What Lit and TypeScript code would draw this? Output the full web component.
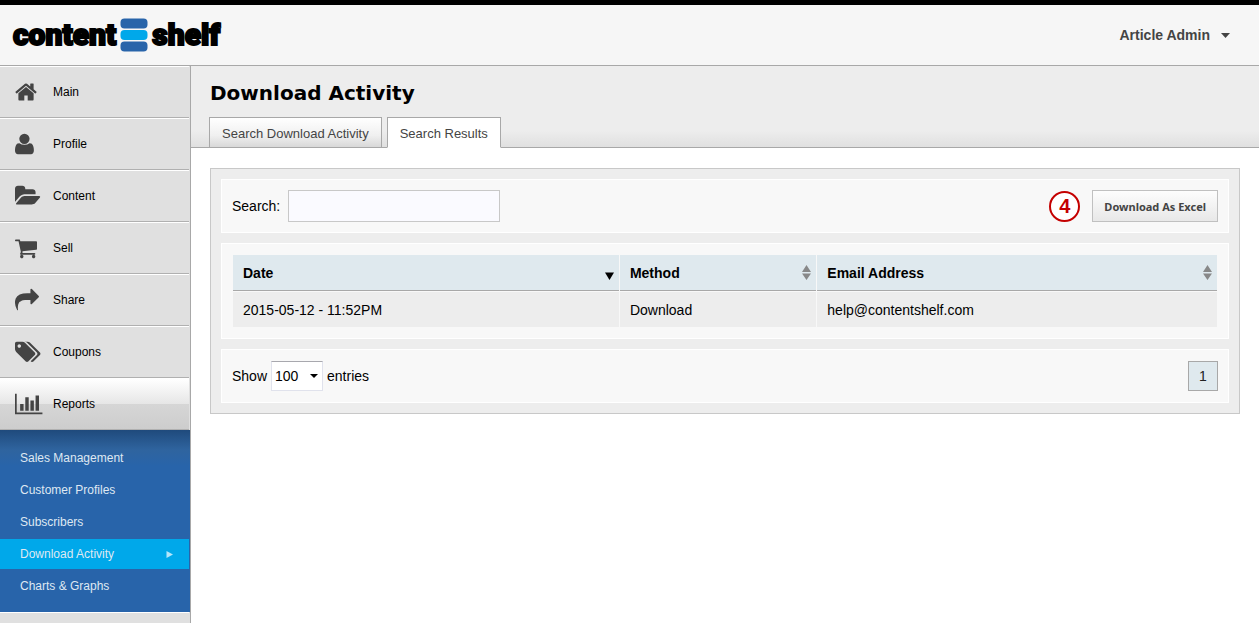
import { LitElement, html, css, svg } from "lit";
import { customElement, state } from "lit/decorators.js";
import { classMap } from "lit/directives/class-map.js";

interface NavItem {
  label: string;
  box: string;
  width: number;
  path: string;
  active?: boolean;
}

const NAV: NavItem[] = [
  {
    label: "Main", box: "64 0 1664 1792", width: 22,
    path: "M1472 992v480q0 26-19 45t-45 19h-384v-384h-256v384h-384q-26 0-45-19t-19-45v-480q0-1 .5-3t.5-3l575-474 575 474q1 2 1 6zm223-69l-62 74q-8 9-21 11h-3q-13 0-21-7l-692-577-692 577q-12 8-24 7-13-2-21-11l-62-74q-8-10-7-23.5t11-21.5l719-599q32-26 76-26t76 26l244 204v-195q0-14 9-23t23-9h192q14 0 23 9t9 23v408l219 182q10 8 11 21.5t-7 23.5z",
  },
  {
    label: "Profile", box: "256 0 1408 1792", width: 19,
    path: "M1664 1399q0 109-62.500 187t-150.500 78h-982q-88 0-150.500-78t-62.500-187q0-85 8.500-160.500t31.500-152 58.500-131 94-89 134.500-34.500q150 128 377 128t377-128q76 0 134.500 34.500t94 89 58.500 131 31.500 152 8.500 160.500zm-320-887q0 159-112.500 271.500t-271.500 112.500-271.500-112.500-112.500-271.500 112.500-271.500 271.500-112.500 271.500 112.500 112.500 271.500z",
  },
  {
    label: "Content", box: "0 0 1920 1792", width: 26,
    path: "M1879 952q0 31-31 66l-336 396q-43 51-120.500 86.500t-143.500 35.500h-1088q-34 0-60.500-13t-26.500-43q0-31 31-66l336-396q43-51 120.500-86.500t143.500-35.500h1088q34 0 60.500 13t26.500 43zm-343-344v160h-832q-94 0-197 47.500t-164 119.500l-337 396-5 6q0-4-.5-12.500t-.5-12.500v-960q0-92 66-158t158-66h320q92 0 158 66t66 158v32h544q92 0 158 66t66 158z",
  },
  {
    label: "Sell", box: "64 0 1664 1792", width: 22,
    path: "M704 1536q0 52-38 90t-90 38-90-38-38-90 38-90 90-38 90 38 38 90zm896 0q0 52-38 90t-90 38-90-38-38-90 38-90 90-38 90 38 38 90zm128-1088v512q0 24-16.500 42.500t-40.500 21.500l-1044 122q13 60 13 70 0 16-24 64h920q26 0 45 19t19 45-19 45-45 19h-1024q-26 0-45-19t-19-45q0-11 8-31.500t16-36 21.500-40 15.500-29.500l-177-823h-204q-26 0-45-19t-19-45 19-45 45-19h256q16 0 28.500 6.500t19.500 15.500 13 24.500 8 26 5.500 29.500 4.500 26h1201q26 0 45 19t19 45z",
  },
  {
    label: "Share", box: "0 0 1792 1792", width: 24,
    path: "M1792 640q0 26-19 45l-512 512q-19 19-45 19t-45-19-19-45v-256h-224q-98 0-175.500 6t-154 21.500-133 42.500-105.500 69.500-80 101-48.500 138.500-17.500 181q0 55 5 123 0 6 2.500 23.500t2.500 26.500q0 15-8.500 25t-23.500 10q-16 0-28-17-7-9-13-22t-13.500-30-10.500-24q-127-285-127-451 0-199 53-333 162-403 875-403h224v-256q0-26 19-45t45-19 45 19l512 512q19 19 19 45z",
  },
  {
    label: "Coupons", box: "0 0 1920 1792", width: 26,
    path: "M448 448q0-53-37.500-90.500t-90.500-37.500-90.500 37.500-37.500 90.500 37.500 90.500 90.500 37.500 90.500-37.500 37.500-90.500zm1067 576q0 53-37 90l-491 492q-39 37-91 37-53 0-90-37l-715-716q-38-37-64.500-101t-26.500-117v-416q0-52 38-90t90-38h416q53 0 117 26.500t102 64.500l715 714q37 39 37 91zm384 0q0 53-37 90l-491 492q-39 37-91 37-36 0-59-14t-53-45l470-470q37-37 37-90 0-52-37-91l-715-714q-38-38-102-64.500t-117-26.500h224q53 0 117 26.500t102 64.500l715 714q37 39 37 91z",
  },
  {
    label: "Reports", box: "0 0 2048 1792", width: 28, active: true,
    path: "M640 896v512h-256v-512h256zm384-512v1024h-256v-1024h256zm1024 1152v128h-2048v-1536h128v1408h1920zm-640-896v768h-256v-768h256zm384-384v1152h-256v-1152h256z",
  },
];

const REPORTS = ["Sales Management", "Customer Profiles", "Subscribers", "Download Activity", "Charts & Graphs"];

const base = css`
  * { box-sizing: border-box; }
  a { color: inherit; text-decoration: none; }
  button, input, select { font-family: inherit; margin: 0; border-radius: 0; }
  svg { display: block; flex: none; }
  ul { list-style: none; margin: 0; padding: 0; }
`;

@customElement("brand-header")
class BrandHeader extends LitElement {
  static styles = [base, css`
    :host { display: block; }
    .bar {
      display: flex; justify-content: space-between; align-items: center;
      height: 66px; padding: 0 29px 0 13px;
      background: #f6f6f6; border-top: 5px solid #000; border-bottom: 1px solid #a8a8a8;
    }
    .logo {
      display: flex; align-items: center; gap: 4px; color: #000;
      font: 900 30px/40px Roboto, "Liberation Sans", sans-serif;
      -webkit-text-stroke: 2px #000;
    }
    .user {
      display: flex; align-items: center; gap: 11px; padding: 0;
      border: 0; background: none; color: #444;
      font-size: 14px; font-weight: bold; line-height: 20px;
    }
  `];

  render() {
    return html`
      <header class="bar">
        <a class="logo" href="#" aria-label="content shelf">
          <span>content</span>
          <svg width="28" height="34" viewBox="0 0 28 34" aria-hidden="true">
            <rect x="0.500" y="0.500" width="27" height="10" rx="4" fill="#2864aa"></rect>
            <rect x="0.500" y="12" width="27" height="10" rx="4" fill="#00a8ea"></rect>
            <rect x="0.500" y="23.500" width="27" height="10" rx="4" fill="#2864aa"></rect>
          </svg>
          <span>shelf</span>
        </a>
        <button class="user" type="button">
          Article Admin
          <svg width="9" height="5" viewBox="0 0 9 5" aria-hidden="true"><path d="M0 0h9L4.500 5z" fill="#444"></path></svg>
        </button>
      </header>`;
  }
}

@customElement("side-nav")
class SideNav extends LitElement {
  static styles = [base, css`
    :host { display: block; background: #e0e0e0; border-right: 1px solid #a8a8a8; }
    .item { margin-right: 1px; border-top: 1px solid #fff; border-bottom: 1px solid #b0b0b0; }
    .link {
      display: grid; grid-template-columns: 38px 1fr; align-items: center;
      height: 50px; padding-left: 15px; color: #000; font-size: 12px;
    }
    .icon { fill: #444; }
    .item.active { background: linear-gradient(#fff, #e6e6e6 50%, #d6d6d6 50%, #cdcdcd); }
    .sub {
      display: grid; gap: 2px; padding: 13px 0 11px;
      background: linear-gradient(#1f4a7c, #2f649f 20px, #2864aa 36px);
    }
    .sub-link {
      display: flex; align-items: center; justify-content: space-between;
      height: 30px; margin-right: 1px; padding: 0 16px 0 20px;
      color: #dfe8f2; font-size: 12px;
    }
    .sub-link.current { background: #00a8ea; }
    .next { height: 30px; margin-right: 1px; border-top: 1px solid #fff; }
  `];

  render() {
    return html`
      <nav>
        <ul>
          ${NAV.map((n) => html`
            <li class=${classMap({ item: true, active: !!n.active })}>
              <a class="link" href="#">
                <svg class="icon" width=${n.width} height="24" viewBox=${n.box} preserveAspectRatio="xMinYMid meet" aria-hidden="true">
                  ${svg`<path d=${n.path}></path>`}
                </svg>
                <span>${n.label}</span>
              </a>
            </li>`)}
        </ul>
        <div class="sub">
          ${REPORTS.map((r) => {
            const current = r === "Download Activity";
            return html`
              <a class=${classMap({ "sub-link": true, current })} href="#">
                <span>${r}</span>
                ${current
                  ? html`<svg width="7" height="7" viewBox="0 0 7 7" aria-hidden="true"><path d="M0.500 0L7 3.500 0.500 7z" fill="#b5e6fa"></path></svg>`
                  : ""}
              </a>`;
          })}
        </div>
        <div class="next"></div>
      </nav>`;
  }
}

@customElement("download-results")
class DownloadResults extends LitElement {
  @state() private query = "";

  static styles = [base, css`
    :host { display: block; font-size: 14px; line-height: 16px; }
    .panel { display: grid; gap: 10px; padding: 10px; background: #ededed; border: 1px solid #c8c8c8; }
    .box { padding: 10px; background: #f8f8f8; border: 1px solid #fff; }
    .row { display: flex; align-items: center; justify-content: space-between; min-height: 54px; }
    .group { display: flex; align-items: center; }
    .search { gap: 8px; }
    .search input {
      width: 212px; height: 32px; padding: 0 8px; font-size: 14px;
      border: 1px solid #c8c8c8; background: #fafaff; outline: none;
    }
    .export { gap: 12px; }
    .step {
      display: grid; place-items: center; width: 31px; height: 31px;
      border: 2px solid #c40000; border-radius: 50%; background: #fff;
      color: #c40000; font-size: 20px; font-weight: bold;
    }
    .excel {
      height: 32px; padding: 0 11px; color: #444; border: 1px solid #c0c0c0;
      background: linear-gradient(#fdfdfd, #e8e8e8);
      font: bold 11px "Noto Sans", sans-serif;
    }
    table { width: 100%; table-layout: fixed; border-collapse: separate; border-spacing: 1px; }
    th, td { padding: 0 10px; text-align: left; }
    th { height: 36px; background: #dfe9ee; border-bottom: 1px solid #a8a8a8; padding-right: 5px; }
    td { height: 35px; background: #ededed; }
    .date { width: 39.3%; }
    .method { width: 20%; }
    .head { display: flex; align-items: center; justify-content: space-between; }
    .size { gap: 4px; }
    .pick { display: grid; align-items: center; }
    .pick > * { grid-area: 1 / 1; }
    .pick svg { justify-self: end; margin-right: 5px; pointer-events: none; }
    select {
      appearance: none; width: 52px; height: 30px; padding: 0 3px; font-size: 14px;
      color: #000; background: #fff; border: 1px solid #e0e2ec; border-top-color: #a8a8ae;
    }
    .page {
      width: 30px; height: 30px; padding: 0; color: #222; font-size: 14px;
      background: #dfe9ee; border: 1px solid #a8a8a8;
    }
  `];

  private both() {
    return html`<svg width="9" height="15" viewBox="0 0 9 15" aria-hidden="true"><path d="M0 7L4.500 0 9 7zM0 8.500h9L4.500 15z" fill="#888"></path></svg>`;
  }

  render() {
    return html`
      <section class="panel">
        <div class="box row">
          <div class="group search">
            <label for="q">Search:</label>
            <input id="q" type="text" .value=${this.query}
              @input=${(e: Event) => (this.query = (e.target as HTMLInputElement).value)} />
          </div>
          <div class="group export">
            <span class="step">4</span>
            <button class="excel" type="button">Download As Excel</button>
          </div>
        </div>
        <div class="box">
          <table>
            <thead>
              <tr>
                <th class="date" aria-sort="descending">
                  <div class="head">Date
                    <svg width="9" height="15" viewBox="0 0 9 15" aria-hidden="true"><path d="M0 7.500h9L4.500 15z" fill="#000"></path></svg>
                  </div>
                </th>
                <th class="method"><div class="head">Method ${this.both()}</div></th>
                <th><div class="head">Email Address ${this.both()}</div></th>
              </tr>
            </thead>
            <tbody>
              <tr><td>2015-05-12 - 11:52PM</td><td>Download</td><td>help@contentshelf.com</td></tr>
            </tbody>
          </table>
        </div>
        <div class="box row">
          <div class="group size">
            <label for="size">Show</label>
            <span class="pick">
              <select id="size"><option>10</option><option>25</option><option>50</option><option selected>100</option></select>
              <svg width="8" height="4" viewBox="0 0 8 4" aria-hidden="true"><path d="M0 0h8L4 4z"></path></svg>
            </span>
            <span>entries</span>
          </div>
          <button class="page" type="button">1</button>
        </div>
      </section>`;
  }
}

@customElement("app-root")
class AppRoot extends LitElement {
  static styles = [base, css`
    :host {
      display: grid; grid-template-rows: auto 1fr; height: 100vh; overflow: hidden;
      background: #fff; color: #000; font-family: "Liberation Sans", Arial, sans-serif;
    }
    .body { display: grid; grid-template-columns: 191px 1fr; min-height: 0; }
    .head {
      padding: 13px 18px 0; border-bottom: 1px solid #a8a8a8;
      background: linear-gradient(#ededed 80%, #e0e0e0);
    }
    h1 { margin: 0; font: bold 20px/28px "DejaVu Sans", Verdana, sans-serif; padding-left: 1px; }
    .tabs { display: flex; gap: 5px; margin: 10px 0 -1px; }
    .tab {
      height: 31px; padding: 0 12px; border: 1px solid #a8a8a8; color: #444;
      font-size: 13px; line-height: 31px;
      background: linear-gradient(#fff, #f0f0f0 60%, #d8d8d8);
    }
    .tab.on { background: #fff; border-bottom-color: #fff; }
    .content { padding: 20px 19px; }
  `];

  render() {
    return html`
      <brand-header></brand-header>
      <div class="body">
        <side-nav></side-nav>
        <main>
          <div class="head">
            <h1>Download Activity</h1>
            <nav class="tabs">
              <a class="tab" href="#">Search Download Activity</a>
              <a class="tab on" href="#" aria-current="page">Search Results</a>
            </nav>
          </div>
          <div class="content"><download-results></download-results></div>
        </main>
      </div>`;
  }
}
